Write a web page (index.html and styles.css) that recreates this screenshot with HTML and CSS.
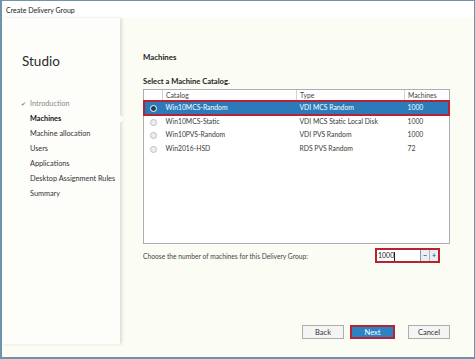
FILE: index.html
```html
<!DOCTYPE html>
<html lang="en">
<head>
    <meta charset="UTF-8">
    <title>Create Delivery Group</title>
    <link rel="stylesheet" href="styles.css">
</head>
<body>
    <div class="window">
        <div class="titlebar">Create Delivery Group</div>
        <div class="content">
            <div class="sidebar">
                <div class="brand">Studio</div>
                <ul class="steps">
                    <li class="done"><span class="check">&#10004;</span>Introduction</li>
                    <li class="current">Machines</li>
                    <li>Machine allocation</li>
                    <li>Users</li>
                    <li>Applications</li>
                    <li>Desktop Assignment Rules</li>
                    <li>Summary</li>
                </ul>
                <div class="notch"></div>
            </div>
            <div class="main">
                <h2>Machines</h2>
                <p class="prompt">Select a Machine Catalog.</p>
                <div class="grid">
                    <table>
                        <tr class="head">
                            <th class="radio-col"></th>
                            <th class="cat">Catalog</th>
                            <th class="type">Type</th>
                            <th class="num">Machines</th>
                        </tr>
                        <tr class="selected">
                            <td class="radio-col"><span class="radio on"></span></td>
                            <td>Win10MCS-Random</td>
                            <td>VDI MCS Random</td>
                            <td>1000</td>
                        </tr>
                        <tr>
                            <td class="radio-col"><span class="radio"></span></td>
                            <td>Win10MCS-Static</td>
                            <td>VDI MCS Static Local Disk</td>
                            <td>1000</td>
                        </tr>
                        <tr>
                            <td class="radio-col"><span class="radio"></span></td>
                            <td>Win10PVS-Random</td>
                            <td>VDI PVS Random</td>
                            <td>1000</td>
                        </tr>
                        <tr>
                            <td class="radio-col"><span class="radio"></span></td>
                            <td>Win2016-HSD</td>
                            <td>RDS PVS Random</td>
                            <td>72</td>
                        </tr>
                    </table>
                </div>
                <div class="count-row">
                    <span class="count-label">Choose the number of machines for this Delivery Group:</span>
                    <div class="spinner">
                        <span class="spin-value">1000<span class="caret"></span></span>
                        <span class="spin-btn">&minus;</span>
                        <span class="spin-btn">+</span>
                    </div>
                </div>
                <div class="actions">
                    <button class="btn">Back</button>
                    <button class="btn primary">Next</button>
                    <button class="btn cancel">Cancel</button>
                </div>
            </div>
        </div>
    </div>
</body>
</html>
```

FILE: styles.css
```css
body {
    margin: 0;
    font-family: Lato, "Open Sans", sans-serif;
    font-size: 7px;
    color: #333;
    background-color: #ffffff;
}

.window {
    width: 475px;
    height: 359px;
    box-sizing: border-box;
    border: 1px solid #6f93ab;
    border-left-width: 2px;
    border-bottom-width: 2px;
    display: flex;
    flex-direction: column;
    background-color: #fbfcf4;
}

.titlebar {
    height: 17px;
    line-height: 18px;
    padding-left: 4px;
    background-color: #ffffff;
    color: #222;
    font-size: 7px;
}

.content {
    flex: 1;
    display: flex;
    padding-right: 3px;
}

.sidebar {
    position: relative;
    width: 118px;
    height: 326px;
    background-color: #fdfdfa;
    box-shadow: 2px 0 3px rgba(0, 0, 0, 0.12);
}

.brand {
    font-size: 13.5px;
    color: #2c2c2c;
    margin: 35px 0 0 20px;
}

.steps {
    list-style: none;
    margin: 27px 0 0 0;
    padding: 0 0 0 28px;
    font-size: 7.3px;
}

.steps li {
    height: 15px;
    line-height: 15px;
    color: #333;
    white-space: nowrap;
    position: relative;
}

.steps li.done {
    color: #8a8a8a;
}

.steps li.current {
    font-weight: bold;
    color: #111;
}

.check {
    position: absolute;
    left: -9px;
    font-size: 6px;
    color: #8a8a8a;
}

.notch {
    position: absolute;
    right: -4px;
    top: 97px;
    width: 0;
    height: 0;
    border-top: 4px solid transparent;
    border-bottom: 4px solid transparent;
    border-left: 4px solid #fdfdfa;
}

.main {
    flex: 1;
    padding: 32px 0 0 23px;
    display: flex;
    flex-direction: column;
}

h2 {
    margin: 0;
    font-size: 7.8px;
    font-weight: bold;
    color: #222;
    line-height: 14px;
}

.prompt {
    margin: 12px 0 0 0;
    font-size: 7.6px;
    font-weight: bold;
    color: #222;
    line-height: 10px;
}

.grid {
    margin-top: 3px;
    width: 307px;
    height: 155px;
    box-sizing: border-box;
    border: 1px solid #a9afb4;
    background-color: #ffffff;
}

table {
    width: 100%;
    border-collapse: collapse;
    font-size: 6.8px;
}

th {
    font-weight: normal;
    text-align: left;
    color: #444;
    height: 10px;
    line-height: 10px;
    padding: 0 3px;
    border-left: 1px solid #cfd3d6;
    border-bottom: 1px solid #cfd3d6;
}

th.radio-col {
    border-left: none;
}

td {
    height: 13.5px;
    line-height: 13px;
    padding: 0 3px;
    color: #3a3a3a;
    white-space: nowrap;
}

.radio-col {
    width: 12px;
    text-align: center;
}

.cat {
    width: 127px;
}

.type {
    width: 101px;
}

.radio {
    display: inline-block;
    width: 5px;
    height: 5px;
    border: 1px solid #b9bcbf;
    border-radius: 50%;
    background-color: #eeeeee;
    vertical-align: middle;
}

.radio.on {
    background-color: #1c3d5c;
    border: 1.5px solid #ffffff;
}

tr.selected td {
    background-color: #2b7bba;
    color: #ffffff;
}

tr.selected {
    outline: 2px solid #b72332;
    outline-offset: -1px;
}

.count-row {
    display: flex;
    align-items: center;
    margin-top: 4px;
    width: 297px;
}

.count-label {
    flex: 1;
    color: #444;
    font-size: 6.7px;
}

.spinner {
    display: flex;
    border: 2px solid #b72332;
    background-color: #ffffff;
    height: 11px;
}

.spin-value {
    width: 42px;
    padding-left: 1px;
    line-height: 11px;
    color: #222;
    border-right: 1px solid #7a9cbb;
}

.caret {
    display: inline-block;
    width: 1px;
    height: 9px;
    background-color: #222;
    vertical-align: middle;
}

.spin-btn {
    width: 8px;
    text-align: center;
    line-height: 11px;
    font-weight: bold;
    color: #2a5a88;
    background-color: #e9eef2;
    border-right: 1px solid #aab5be;
}

.spin-btn:last-child {
    border-right: none;
}

.actions {
    display: flex;
    justify-content: flex-end;
    margin-top: 62px;
    width: 307px;
}

.btn {
    width: 42px;
    height: 14px;
    padding: 0;
    font-family: inherit;
    font-size: 7.5px;
    color: #333;
    background-color: #f4f4f4;
    border: 1px solid #adadad;
    margin-left: 6px;
}

.btn.primary {
    width: 45px;
    color: #ffffff;
    background-color: #2c83c4;
    border: 2px solid #b72332;
}

.btn.cancel {
    margin-left: 13px;
}
```
